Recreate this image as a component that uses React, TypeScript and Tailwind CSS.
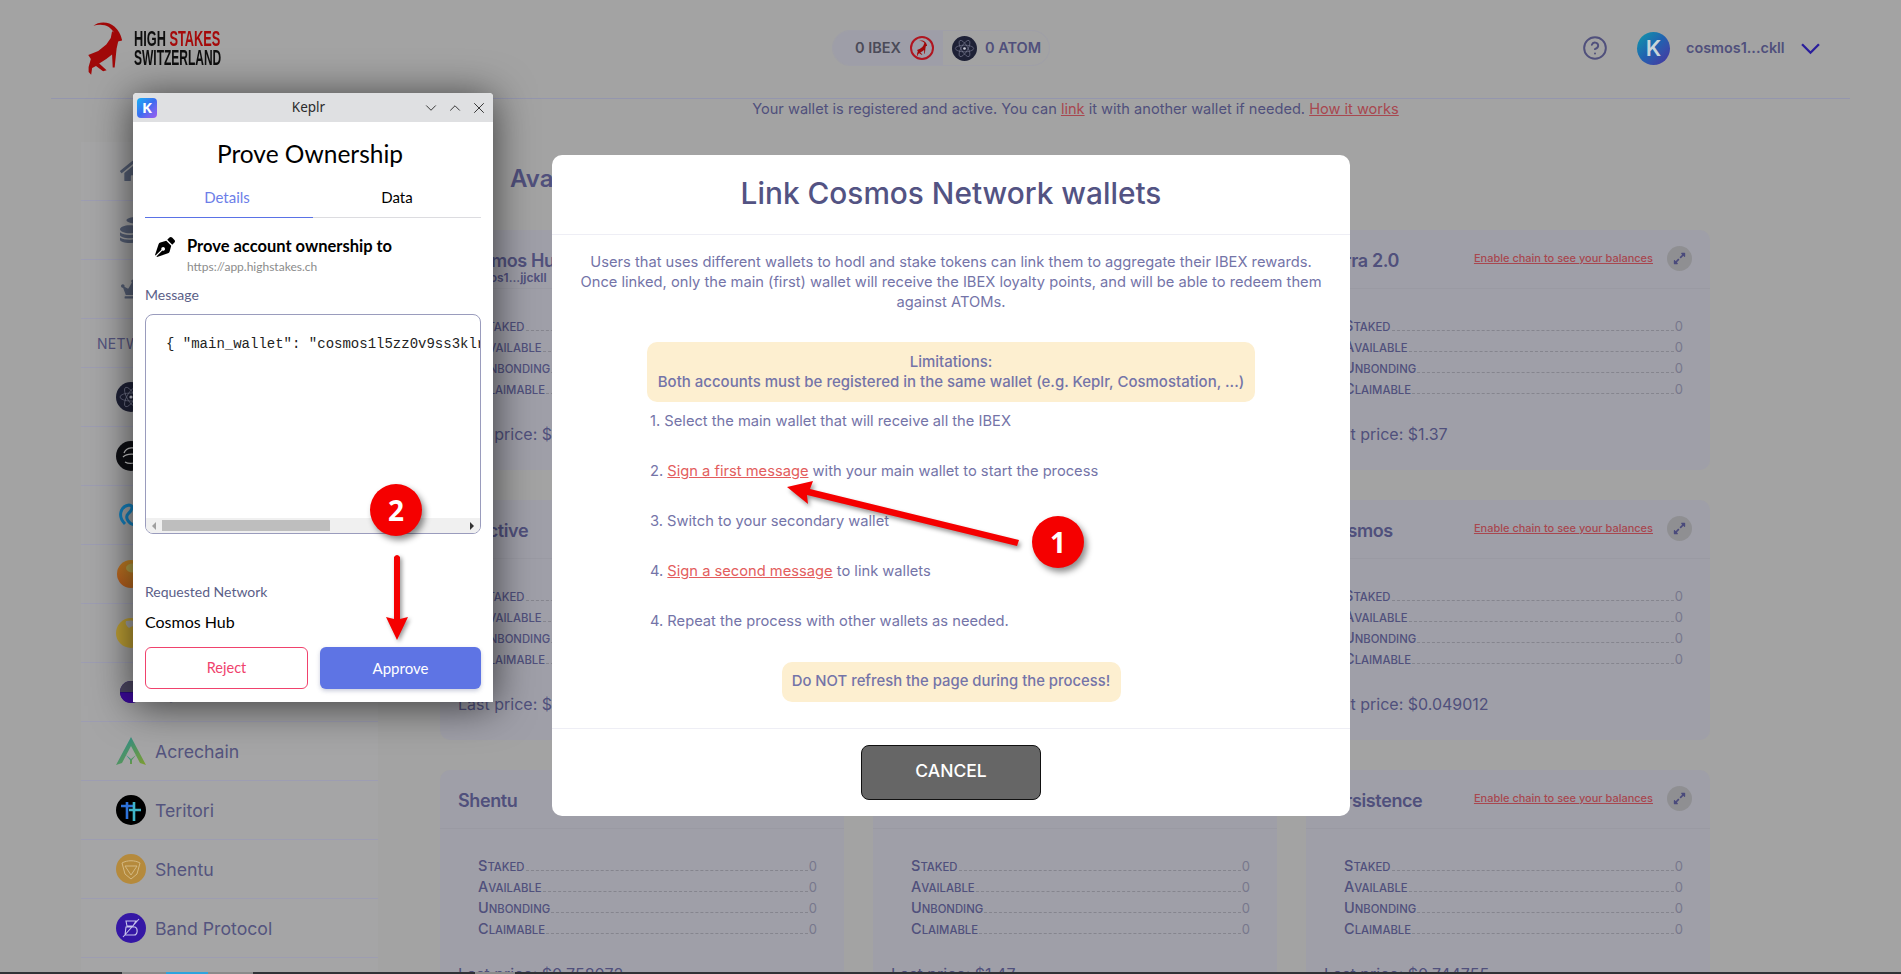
import React from "react";
import { ChevronDown, ChevronUp, X, CircleHelp } from "lucide-react";
import { FaHome, FaCoins, FaCrown, FaPenNib, FaExpandAlt } from "react-icons/fa";

function Ibex({ className }: { className?: string }) {
  return (
    <svg viewBox="80 32 112 168" className={className} fill="#a00808">
      <path d="M100 47 C115 33 148 32 166 50 C178 62 184 72 187 84 L189 92 L178 94 L173 86 C170 75 160 60 148 51 C135 42 115 42 100 47 Z" />
      <path d="M158 64 L172 72 L189 92 L177 96 L172 118 L166 177 L160 177 L158 136 L140 150 L118 164 L141 185 L130 188 L108 172 L96 178 L93 199 L85 191 L85 175 L92 150 L84 138 L115 125 L140 105 L154 85 Z" />
    </svg>
  );
}

function Atom({ className }: { className?: string }) {
  return (
    <svg viewBox="0 0 30 30" className={className}>
      <circle cx="15" cy="15" r="15" fill="#1e2136" />
      <g fill="none" stroke="#7d7f96" strokeWidth="0.7">
        <ellipse cx="15" cy="15" rx="11" ry="4" />
        <ellipse cx="15" cy="15" rx="11" ry="4" transform="rotate(60 15 15)" />
        <ellipse cx="15" cy="15" rx="11" ry="4" transform="rotate(120 15 15)" />
      </g>
      <circle cx="15" cy="15" r="1.6" fill="#c8c9d6" />
    </svg>
  );
}

function NetIcon({ k }: { k: string }) {
  switch (k) {
    case "cosmos":
      return <Atom className="w-[30px] h-[30px]" />;
    case "stride":
      return (
        <svg viewBox="0 0 30 30" className="w-[30px] h-[30px]">
          <circle cx="15" cy="15" r="15" fill="#0e0f14" />
          <g fill="none" stroke="#c9c9c9" strokeWidth="1.2">
            <path d="M8 12 C10 6 20 5 24 10 M7 16 C11 12 22 12 23 17 C23 22 14 24 9 21" />
          </g>
        </svg>
      );
    case "blue":
      return (
        <svg viewBox="0 0 30 30" className="w-[30px] h-[30px]">
          <g fill="none" stroke="#1382c0" strokeWidth="3">
            <path d="M9 24 C1 16 5 6 13 5 C18 5 16 11 12 14 C9 17 12 24 19 25" />
            <path d="M17 6 C25 6 26 13 20 16" />
          </g>
        </svg>
      );
    case "orange":
      return (
        <svg viewBox="0 0 30 30" className="w-[30px] h-[30px]">
          <defs>
            <linearGradient id="og" x1="0" y1="1" x2="1" y2="0">
              <stop offset="0" stopColor="#b6561c" />
              <stop offset="1" stopColor="#c99a2a" />
            </linearGradient>
          </defs>
          <ellipse cx="15" cy="15" rx="14" ry="14" fill="url(#og)" />
          <ellipse cx="17" cy="9" rx="7" ry="4.5" fill="#b3a24a" />
        </svg>
      );
    case "yellow":
      return (
        <svg viewBox="0 0 30 30" className="w-[30px] h-[30px]">
          <circle cx="15" cy="15" r="15" fill="#bd9f34" />
          <path d="M10 3 C18 1 26 4 29 10 C24 7 17 7 13 10 C10 8 9 5 10 3 Z" fill="#a3a3a3" />
        </svg>
      );
    case "purple":
      return (
        <svg viewBox="0 0 30 30" className="w-[30px] h-[30px]">
          <circle cx="15" cy="15" r="11" fill="#2a0a80" />
          <path d="M4 15 A11 11 0 0 1 26 15 Z" fill="#4b4660" />
          <path d="M4 16 H26 A11 11 0 0 1 15 26 A11 11 0 0 1 4 16" fill="#3d0a9c" />
        </svg>
      );
    case "acre":
      return (
        <svg viewBox="0 0 30 30" className="w-[30px] h-[30px]">
          <defs>
            <linearGradient id="ag" x1="0" y1="0" x2="1" y2="1">
              <stop offset="0" stopColor="#1f8a9a" />
              <stop offset="1" stopColor="#7f9d2e" />
            </linearGradient>
          </defs>
          <path d="M15 1 L30 29 L24 27 L15 10 L6 27 L0 29 Z" fill="url(#ag)" />
          <path d="M10 19 L15 23 L20 19 L16 24 V28 H14 V24 Z" fill="url(#ag)" />
        </svg>
      );
    case "teritori":
      return (
        <svg viewBox="0 0 30 30" className="w-[30px] h-[30px]">
          <circle cx="15" cy="15" r="15" fill="#000" />
          <g fill="none" strokeWidth="2.6">
            <path d="M11 7 V24 M5 11 H18" stroke="#2d72d9" />
            <path d="M18 7 V26 M13 15 H25" stroke="#3fb5c8" />
          </g>
        </svg>
      );
    case "shentu":
      return (
        <svg viewBox="0 0 30 30" className="w-[30px] h-[30px]">
          <circle cx="15" cy="15" r="15" fill="#b58a3c" />
          <path d="M6 9 C11 6 19 6 24 9 L21 20 L15 25 L9 20 Z M9 12 L15 21 L21 12 Z" fill="none" stroke="#d4b982" strokeWidth="1" />
        </svg>
      );
    default:
      return (
        <svg viewBox="0 0 30 30" className="w-[30px] h-[30px]">
          <circle cx="15" cy="15" r="15" fill="#3517a5" />
          <path d="M10 8 H20 L17 13 H11 Z M10 14 H19 C22 15 22 22 18 22 H9 Z M7 24 L23 6" fill="none" stroke="#c8c4ec" strokeWidth="1.1" />
        </svg>
      );
  }
}

const nav = [
  { i: <FaHome size={26} />, t: "Dashboard" },
  { i: <FaCoins size={26} />, t: "Stake" },
  { i: <FaCrown size={24} />, t: "Rewards" },
];

const nets = [
  ["cosmos", "Cosmos Hub"],
  ["stride", "Stride"],
  ["blue", "Kava"],
  ["orange", "Osmosis"],
  ["yellow", "Juno"],
  ["purple", "Nyx"],
  ["acre", "Acrechain"],
  ["teritori", "Teritori"],
  ["shentu", "Shentu"],
  ["band", "Band Protocol"],
];

const cards = [
  { t: "Cosmos Hub", s: "cosmos1...jjckll", p: "$12.54" },
  { t: "Akash", p: "$0.42" },
  { t: "Terra 2.0", p: "$1.37" },
  { t: "Injective", p: "$4.21" },
  { t: "Stargaze", p: "$0.021" },
  { t: "Cosmos", p: "$0.049012" },
  { t: "Shentu", p: "$0.758072" },
  { t: "Evmos", p: "$1.47" },
  { t: "Persistence", p: "$0.744755" },
];

function Row({ a, b }: { a: string; b: string }) {
  return (
    <div className="flex items-baseline h-[21px] leading-[21px]">
      <span className="font-medium text-[#50507c] text-[14.5px]">
        {a}
        <span className="text-[11.3px]">{b}</span>
      </span>
      <span className="flex-1 h-0 mx-[1px] border-b border-dashed border-[#85858e]" />
      <span className="text-[13px] text-[#77778c]">0</span>
    </div>
  );
}

function Card({ t, s, p }: { t: string; s?: string; p: string }) {
  return (
    <div className="h-[240px] rounded-[10px] bg-[#9f9fa8]">
      <div className="h-[59px] border-b border-[#9a9aa3] pl-[18px] pr-[18px] pt-[19px] flex justify-between items-start">
        <div>
          <div className="text-[18px] leading-[24px] font-semibold text-[#50507c] tracking-[-0.4px]">{t}</div>
          {s && <div className="text-[12px] leading-[14px] font-semibold text-[#50507c] -mt-[2px]">{s}</div>}
        </div>
        <div className="flex items-center gap-[14px] -mt-[3px]">
          <span className="text-[11px] font-medium text-[#a8474f] underline">Enable chain to see your balances</span>
          <span className="w-[25px] h-[25px] rounded-full bg-[#8f8f92] text-[#4a4a7c] flex items-center justify-center">
            <FaExpandAlt size={13} />
          </span>
        </div>
      </div>
      <div className="pl-[38px] pr-[27px] pt-[26px]">
        <Row a="S" b="TAKED" />
        <Row a="A" b="VAILABLE" />
        <Row a="U" b="NBONDING" />
        <Row a="C" b="LAIMABLE" />
      </div>
      <div className="pl-[18px] mt-[23px] text-[16px] leading-[24px] text-[#50507c]">Last price: {p}</div>
    </div>
  );
}

function Badge({ n, className }: { n: string; className: string }) {
  return (
    <div className={"absolute w-[52px] h-[52px] rounded-full bg-[#f50000] text-white text-[28px] font-bold flex items-center justify-center shadow-[3px_4px_6px_rgba(0,0,0,0.45)] font-['Open_Sans',sans-serif] " + className}>
      {n}
    </div>
  );
}

function Keplr() {
  return (
    <div className="absolute left-[133px] top-[93px] w-[360px] h-[609px] bg-white rounded-t-[4px] shadow-[0_4px_40px_rgba(0,0,0,0.65)] font-['Lato',sans-serif] overflow-hidden">
      <div className="h-[29px] bg-[#dfe0e2] flex items-center relative pl-[4px] pr-[5px]">
        <div className="w-[20px] h-[20px] rounded-[4px] bg-gradient-to-br from-[#09b1f5] via-[#3a6cf0] to-[#9a5bf0] text-white text-[15px] font-bold flex items-center justify-center font-['Open_Sans',sans-serif]">K</div>
        <div className="flex-1 text-center text-[13.5px] text-[#2b2b2b] font-['Noto_Sans',sans-serif] pl-[38px]">Keplr</div>
        <div className="flex items-center gap-[6px] text-[#333]">
          <ChevronDown size={18} strokeWidth={1.3} />
          <ChevronUp size={18} strokeWidth={1.3} />
          <X size={18} strokeWidth={1.3} />
        </div>
      </div>
      <div className="text-center text-[24.5px] leading-[32px] text-black mt-[16px] pr-[6px]">Prove Ownership</div>
      <div className="mx-[12px] mt-[13px] flex text-[15px] border-b border-[#dcdce0] h-[35px]">
        <div className="w-1/2 text-center text-[#6c7ee8] border-b border-[#5a72e6] h-[35px] leading-[28px] pr-[4px]">Details</div>
        <div className="w-1/2 text-center text-black leading-[28px]">Data</div>
      </div>
      <div className="mx-[12px] mt-[18px] flex">
        <div className="w-[42px] pl-[10px] pt-[1px]"><FaPenNib size={20} color="#000" /></div>
        <div>
          <div className="text-[16.5px] leading-[20px] font-bold text-black">Prove account ownership to</div>
          <div className="text-[12px] leading-[16px] mt-[3px] text-[#8b8b8b]">https://app.highstakes.ch</div>
        </div>
      </div>
      <div className="mx-[12px] mt-[10px] text-[14px] leading-[20px] text-[#5b6088]">Message</div>
      <div className="mx-[12px] mt-[9px] h-[220px] border border-[#9a9cbd] rounded-[8px] overflow-hidden flex flex-col">
        <div className="flex-1 pt-[19px] pl-[20px] text-[14px] leading-[20px] whitespace-nowrap overflow-hidden text-[#222] font-['Liberation_Mono',monospace]">{'{ "main_wallet": "cosmos1l5zz0v9ss3klrxyz'}</div>
        <div className="h-[15px] bg-[#f0f0f0] flex items-center pl-[16px] relative">
          <span className="absolute left-[6px] w-0 h-0 border-y-[4px] border-y-transparent border-r-[4px] border-r-[#a0a0a0]" />
          <div className="w-[168px] h-[11px] bg-[#bebebe]" />
          <span className="absolute right-[6px] w-0 h-0 border-y-[4px] border-y-transparent border-l-[4px] border-l-[#333]" />
        </div>
      </div>
      <div className="mx-[12px] mt-[48px] text-[14px] leading-[20px] text-[#5b6088]">Requested Network</div>
      <div className="mx-[12px] mt-[10px] text-[16px] leading-[20px] text-black">Cosmos Hub</div>
      <div className="mx-[12px] mt-[15px] flex gap-[12px]">
        <div className="flex-1 h-[42px] border border-[#f0426d] rounded-[6px] text-[#f0426d] text-[14.5px] flex items-center justify-center">Reject</div>
        <div className="flex-1 h-[42px] rounded-[6px] bg-[#5e74e4] text-white text-[15px] flex items-center justify-center shadow-[0_2px_4px_rgba(80,90,140,0.3)]">Approve</div>
      </div>
    </div>
  );
}

function Modal() {
  const text = "text-[#7474a8]";
  return (
    <div className={"absolute left-[552px] top-[155px] w-[798px] h-[661px] bg-white rounded-[10px] " + text}>
      <div className="h-[80px] border-b border-[#eeeef5] flex items-center justify-center text-[29.8px] font-medium text-[#535383] pb-[2px]">Link Cosmos Network wallets</div>
      <div className="mt-[17px] text-center text-[14.7px] leading-[20px]">
        Users that uses different wallets to hodl and stake tokens can link them to aggregate their IBEX rewards.<br />
        Once linked, only the main (first) wallet will receive the IBEX loyalty points, and will be able to redeem them<br />
        against ATOMs.
      </div>
      <div className="mx-[95px] mt-[30px] h-[60px] rounded-[10px] bg-[#fdefd0] text-center text-[15px] leading-[20px] font-medium pt-[10px]">
        Limitations:<br />Both accounts must be registered in the same wallet (e.g. Keplr, Cosmostation, ...)
      </div>
      <div className="ml-[98px] mt-[9px] text-[14.7px] leading-[20px] flex flex-col gap-[30px]">
        <div>1. Select the main wallet that will receive all the IBEX</div>
        <div>2. <span className="text-[#e35d5d] underline">Sign a first message</span> with your main wallet to start the process</div>
        <div>3. Switch to your secondary wallet</div>
        <div>4. <span className="text-[#e35d5d] underline">Sign a second message</span> to link wallets</div>
        <div>4. Repeat the process with other wallets as needed.</div>
      </div>
      <div className="flex justify-center mt-[31px]">
        <div className="w-[339px] h-[40px] rounded-[10px] bg-[#fdefd0] flex items-center justify-center text-[14.85px] font-medium pb-[2px]">Do NOT refresh the page during the process!</div>
      </div>
      <div className="mt-[26px] border-t border-[#eeeef5] pt-[16px] flex justify-center">
        <div className="w-[180px] h-[55px] rounded-[8px] bg-[#666666] border border-[#111] text-white font-medium text-[17.5px] flex items-center justify-center pb-[2px]">CANCEL</div>
      </div>
    </div>
  );
}

export default function App() {
  return (
    <div className="relative h-screen w-full overflow-hidden bg-[#a3a3a3] font-['Inter',sans-serif]">
      <header className="mx-[51px] h-[99px] border-b border-[#9496ae] flex items-center relative">
        <div className="ml-[36px] flex items-center gap-[11px] -mt-[2px]">
          <Ibex className="w-[36px] h-[54px]" />
          <div className="w-[88px] font-['Liberation_Sans',sans-serif] font-bold text-[22px] leading-[19px] whitespace-nowrap">
            <div className="origin-left scale-x-[0.58] text-[#0e0e0e]">HIGH <span className="text-[#a50a0a]">STAKES</span></div>
            <div className="origin-left scale-x-[0.545] text-[#0e0e0e]">SWITZERLAND</div>
          </div>
        </div>
        <div className="ml-[610px] flex h-[36px] rounded-full border border-[#9f9fa8] text-[14.5px] font-semibold overflow-hidden -mt-[2px]">
          <div className="w-[110px] bg-[#9e9ea8] flex items-center pl-[22px] gap-[9px] text-[#4b4b58]">
            <span>0 IBEX</span>
            <span className="w-[24px] h-[24px] rounded-full border-2 border-[#b01520] flex items-center justify-center"><Ibex className="w-[12px] h-[16px]" /></span>
          </div>
          <div className="w-[106px] flex items-center pl-[9px] gap-[8px] text-[#50507c]">
            <Atom className="w-[25px] h-[25px]" />
            <span>0 ATOM</span>
          </div>
        </div>
        <div className="ml-auto flex items-center pr-[30px] -mt-[2px]">
          <CircleHelp size={26} strokeWidth={1.8} className="text-[#50507c]" />
          <div className="ml-[29px] w-[33px] h-[33px] rounded-full bg-gradient-to-br from-[#0d9aa8] via-[#2160b0] to-[#43309e] text-[#c9d5d9] text-[22px] font-semibold flex items-center justify-center">K</div>
          <span className="ml-[16px] w-[104px] text-[14.4px] font-semibold text-[#50507c] whitespace-nowrap">cosmos1...ckll</span>
          <svg viewBox="0 0 18 12" className="ml-[11px] w-[19px] h-[13px]" fill="none" stroke="#2a1e9c" strokeWidth="2.2"><path d="M1 2 L9 10 L17 2" /></svg>
        </div>
      </header>
      <div className="text-center text-[14.6px] leading-[20px] text-[#50507c] pl-[250px]">
        Your wallet is registered and active. You can <span className="text-[#a8474f] underline">link</span> it with another wallet if needed. <span className="text-[#a8474f] underline">How it works</span>
      </div>
      <div className="flex mt-[23px]">
        <aside className="ml-[81px] w-[297px] shrink-0 bg-[#a5a5a6] text-[#54547e]">
          {nav.map((n) => (
            <div key={n.t} className="h-[59px] border-b border-[#9d9db2] flex items-center pl-[37px] gap-[12px] text-[18px]">
              <span className="w-[30px] flex justify-center text-[#555f75]">{n.i}</span>{n.t}
            </div>
          ))}
          <div className="h-[49px] border-b border-[#9d9db2] flex items-center pl-[16px] text-[14px] tracking-[0.3px]">NETWORKS</div>
          {nets.map(([k, t]) => (
            <div key={k} className="h-[59px] border-b border-[#9d9db2] flex items-center pl-[35px] gap-[9px] text-[17.7px]">
              <NetIcon k={k} /><span className="pt-[2px]">{t}</span>
            </div>
          ))}
        </aside>
        <main className="ml-[62px] w-[1270px] shrink-0">
          <h1 className="ml-[70px] mt-[20px] h-[68px] text-[24px] leading-[34px] font-semibold text-[#50507c] whitespace-nowrap">Available networks</h1>
          <div className="grid grid-cols-3 gap-x-[29px] gap-y-[30px]">
            {cards.map((c) => <Card key={c.t} {...c} />)}
          </div>
        </main>
      </div>

      <Modal />
      <Keplr />

      {/* annotations */}
      <svg className="absolute left-[770px] top-[470px] w-[270px] h-[90px] drop-shadow-[2px_3px_2px_rgba(0,0,0,0.4)]" viewBox="770 470 270 90">
        <path d="M787 487 L813 481 L810 489 L1019 540 L1017 546 L807 495 L808 504 Z" fill="#f50000" />
      </svg>
      <svg className="absolute left-[380px] top-[550px] w-[36px] h-[96px] drop-shadow-[2px_2px_2px_rgba(0,0,0,0.4)]" viewBox="380 550 36 96">
        <path d="M394 557 Q397 553 400 557 L400 619 L408 617 L397 640 L386 617 L394 619 Z" fill="#f50000" />
      </svg>
      <Badge n="1" className="left-[1032px] top-[516px]" />
      <Badge n="2" className="left-[370px] top-[484px]" />

      <div className="absolute left-0 right-0 bottom-0 h-[2px] bg-[#303236] flex">
        <div className="ml-[122px] w-[44px] bg-[#8a8a8a]" />
        <div className="w-[42px] bg-[#2ea3dd]" />
        <div className="w-[45px] bg-[#8a8a8a]" />
        <div className="ml-[222px] w-[40px] bg-[#8a8a8a]" />
      </div>
    </div>
  );
}
